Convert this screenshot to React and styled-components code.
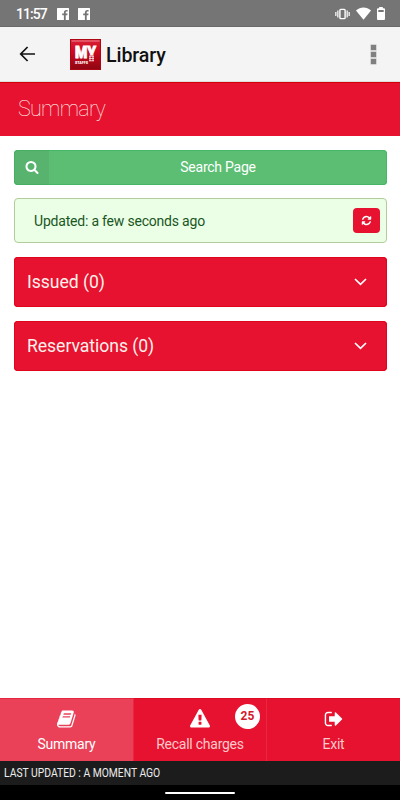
import React, { useState } from 'react';
import styled, { createGlobalStyle } from 'styled-components';

const GlobalStyle = createGlobalStyle`
  * {
    box-sizing: border-box;
  }
  body {
    margin: 0;
    background-color: #fff;
    font-family: Roboto, "Liberation Sans", sans-serif;
  }
  button {
    font-family: inherit;
    border: none;
    padding: 0;
    cursor: pointer;
  }
`;

const Screen = styled.div`
  display: flex;
  flex-direction: column;
  width: 400px;
  height: 800px;
  overflow: hidden;
  background-color: #fff;
`;

const StatusBar = styled.div`
  display: flex;
  align-items: center;
  flex: none;
  height: 27px;
  padding: 1px 15px 0 15px;
  background-color: #757575;
  border-bottom: 1px solid #696969;
  color: #fff;
`;

const Clock = styled.span`
  width: 42px;
  font-size: 14px;
  font-weight: 500;
  letter-spacing: -0.95px;
  padding-left: 1px;
  white-space: nowrap;
`;

const Notifications = styled.div`
  display: flex;
  gap: 9px;
  flex: 1;
`;

const StatusIcons = styled.div`
  display: flex;
  align-items: center;
  gap: 6px;
`;

const AppBar = styled.header`
  display: flex;
  align-items: center;
  flex: none;
  height: 55px;
  padding: 0 24px 0 19px;
  background-color: #f4f4f4;
  border-bottom: 1px solid #e2dcdc;
`;

const BackButton = styled.button`
  display: flex;
  width: 51px;
  background: none;
`;

const Logo = styled.svg`
  display: block;
  flex: none;
`;

const AppTitle = styled.h1`
  flex: 1;
  margin: 2px 0 0 5px;
  font-size: 19.6px;
  font-weight: 500;
  letter-spacing: -0.1px;
  color: #111;
`;

const MenuButton = styled.button`
  display: flex;
  flex-direction: column;
  gap: 2px;
  background: none;
`;

const MenuDot = styled.span`
  width: 5px;
  height: 5px;
  background-color: #808080;
  box-shadow: 0 0 0 0.5px #b5b5b5;
`;

const PageHeading = styled.div`
  display: flex;
  align-items: center;
  flex: none;
  height: 54px;
  padding: 0 18px 2px;
  background-color: #e6122f;
  border-top: 1px solid #d0000d;
`;

const PageTitle = styled.h2`
  margin: 0;
  font-size: 21.5px;
  font-weight: 100;
  letter-spacing: -0.7px;
  color: #fff0e8;
`;

const Content = styled.main`
  display: flex;
  flex-direction: column;
  flex: 1;
  padding: 14px 13px 0 14px;
`;

const SearchButton = styled.button`
  display: flex;
  height: 35px;
  margin-bottom: 13px;
  overflow: hidden;
  border-radius: 4px;
  background-color: #5bbe73;
  box-shadow: inset 0 0 0 1px #46b865;
  color: #fff;
`;

const SearchIcon = styled.span`
  display: flex;
  align-items: center;
  justify-content: center;
  width: 35px;
  height: 100%;
  padding-bottom: 1px;
  background-color: rgba(70, 110, 90, 0.14);
`;

const SearchLabel = styled.span`
  flex: 1;
  align-self: center;
  padding-bottom: 1px;
  font-size: 14px;
  letter-spacing: -0.25px;
`;

const UpdatedBox = styled.div`
  display: flex;
  align-items: center;
  justify-content: space-between;
  height: 45px;
  margin-bottom: 14px;
  padding: 0 6px 0 19px;
  border: 1px solid #b2cc9b;
  border-radius: 4px;
  background-color: #ebffe6;
  color: #1a561f;
  font-size: 14px;
  letter-spacing: -0.2px;
`;

const RefreshButton = styled.button`
  display: flex;
  align-items: center;
  justify-content: center;
  width: 27px;
  height: 25px;
  border-radius: 4px;
  background-color: #e6122f;
  color: #fff;
`;

const Panel = styled.button`
  display: flex;
  align-items: center;
  justify-content: space-between;
  height: 50px;
  margin-bottom: 14px;
  padding: 0 20px 0 13px;
  border-radius: 4px;
  background-color: #e6122f;
  box-shadow: inset 0 0 0 1px #e0041c;
  color: #fff0ec;
  font-size: 17.6px;
  letter-spacing: -0.05px;
`;

const TabBar = styled.nav`
  display: grid;
  grid-template-columns: 134px 133px 133px;
  flex: none;
  height: 63px;
  background-color: #e6122f;
`;

const Tab = styled.button`
  position: relative;
  display: flex;
  flex-direction: column;
  align-items: center;
  padding-top: 10px;
  background-color: ${(props) => (props.$active ? '#ea4159' : '#e6122f')};
  border-top: 1px solid ${(props) => (props.$active ? '#e6253f' : '#df0a22')};
  color: #fff;

  &:not(:last-child) {
    border-right: 1px solid #e9273f;
  }
`;

const TabLabel = styled.span`
  margin-top: 7px;
  font-size: 14px;
  line-height: 16px;
  letter-spacing: -0.25px;
  white-space: nowrap;
  color: ${(props) => (props.$active ? '#fff' : '#ffc9cb')};
`;

const Badge = styled.span`
  position: absolute;
  top: 5px;
  right: 6px;
  width: 25px;
  height: 25px;
  border-radius: 50%;
  background-color: #fff;
  color: #d4182b;
  font-size: 12px;
  font-weight: 700;
  line-height: 24px;
  text-align: center;
`;

const Footer = styled.footer`
  display: flex;
  align-items: center;
  flex: none;
  height: 24px;
  padding-left: 4px;
  background-color: #1c1c1c;
`;

// squeezed to look like Roboto Condensed
const FooterText = styled.span`
  font-size: 12px;
  color: #ececec;
  white-space: nowrap;
  transform: scaleX(0.86);
  transform-origin: left center;
`;

const GestureBar = styled.div`
  display: flex;
  justify-content: center;
  flex: none;
  height: 15px;
  padding-top: 7px;
  background-color: #000;
`;

const GesturePill = styled.span`
  width: 70px;
  height: 2px;
  border-radius: 1px;
  background-color: #fff;
`;

const icons = {
  search: 'M1216 832q0-185-131.5-316.5t-316.5-131.5-316.5 131.5-131.5 316.5 131.5 316.5 316.5 131.5 316.5-131.5 131.5-316.5zm512 832q0 52-38 90t-90 38q-54 0-90-38l-343-342q-179 124-399 124-143 0-273.5-55.5t-225-150-150-225-55.5-273.5 55.5-273.5 150-225 225-150 273.5-55.5 273.5 55.5 225 150 150 225 55.5 273.5q0 220-124 399l343 343q37 37 37 90z',
  refresh: 'M1639 1056q0 5-1 7-64 268-268 434.5t-478 166.5q-146 0-282.5-55t-243.5-157l-129 129q-19 19-45 19t-45-19-19-45v-448q0-26 19-45t45-19h448q26 0 45 19t19 45-19 45l-137 137q71 66 161 102t187 36q134 0 250-65t186-179q11-17 53-117 8-23 30-23h192q13 0 22.5 9.5t9.5 22.5zm25-800v448q0 26-19 45t-45 19h-448q-26 0-45-19t-19-45 19-45l138-138q-148-137-349-137-134 0-250 65t-186 179q-11 17-53 117-8 23-30 23h-199q-13 0-22.5-9.5t-9.5-22.5v-7q65-268 270-434.5t480-166.5q146 0 284 55.5t245 156.5l130-129q19-19 45-19t45 19 19 45z',
  book: 'M1639 478q40 57 18 129l-275 906q-19 64-76.5 107.5t-122.5 43.5h-923q-77 0-148.5-53.5t-99.5-131.5q-24-67-2-127 0-4 3-27t4-37q1-8-3-21.5t-3-19.5q2-11 8-21t16.5-23.5 16.5-23.5q23-38 45-91.5t30-91.5q3-10 .5-30t-.5-28q3-11 17-28t17-23q21-36 42-92t25-90q1-9-2.5-32t.5-28q4-13 22-30.5t22-22.5q19-26 42.5-84.5t27.5-96.5q1-8-3-25.5t-2-26.5q2-8 9-18t18-23 17-21q8-12 16.5-30.5t15-35 16-36 19.5-32 26.5-23.5 36-11.5 47.5 5.5l-1 3q38-9 51-9h761q74 0 114 56t18 130l-274 906q-36 119-71.5 153.5t-128.5 34.5h-869q-27 0-38 15-11 16-1 43 24 70 144 70h923q29 0 56-15.5t35-41.5l300-987q7-22 5-57 38 15 59 43zm-1064 2q-4 13 2 22.5t20 9.5h608q13 0 25.5-9.5t16.5-22.5l21-64q4-13-2-22.5t-20-9.5h-608q-13 0-25.5 9.5t-16.5 22.5zm-83 256q-4 13 2 22.5t20 9.5h608q13 0 25.5-9.5t16.5-22.5l21-64q4-13-2-22.5t-20-9.5h-608q-13 0-25.5 9.5t-16.5 22.5z',
  warning: 'M1024 1375v-190q0-14-9.5-23.5t-22.5-9.5h-192q-13 0-22.5 9.5t-9.5 23.5v190q0 14 9.5 23.5t22.5 9.5h192q13 0 22.5-9.5t9.5-23.5zm-2-374l18-459q0-12-10-19-13-11-24-11h-220q-11 0-24 11-10 7-10 21l17 457q0 10 10 16.5t24 6.5h185q14 0 23.5-6.5t10.5-16.5zm-14-934l768 1408q35 63-2 126-17 29-46.5 46t-63.5 17h-1536q-34 0-63.5-17t-46.5-46q-37-63-2-126l768-1408q17-31 47-49t65-18 65 18 47 49z',
  exit: 'M704 1440q0 4 1 20t.5 26.5-3 23.5-10 19.5-20.5 6.5h-320q-119 0-203.5-84.5t-84.5-203.5v-704q0-119 84.5-203.5t203.5-84.5h320q13 0 22.5 9.5t9.5 22.5q0 4 1 20t.5 26.5-3 23.5-10 19.5-20.5 6.5h-320q-66 0-113 47t-47 113v704q0 66 47 113t113 47h312l11.5 1 11.5 3 8 5.5 7 9 2 13.5zm928-544q0 26-19 45l-544 544q-19 19-45 19t-45-19-19-45v-288h-448q-26 0-45-19t-19-45v-384q0-26 19-45t45-19h448v-288q0-26 19-45t45-19 45 19l544 544q19 19 19 45z',
};

const Icon = ({ name, size }) => (
  <svg width={size} height={size} viewBox="0 0 1792 1792" fill="currentColor">
    <path d={icons[name]} />
  </svg>
);

const FacebookIcon = () => (
  <svg width="12" height="12" viewBox="0 0 12 12">
    <rect width="12" height="12" rx="0.5" fill="#fff" />
    <path d="M6.9 12V7.3H5.2V5.6h1.7V4.5c0-1.7.9-2.6 2.5-2.6h1.2v1.7h-.9c-.7 0-1 .3-1 1v1h1.8l-.2 1.7H8.7V12z" fill="#757575" />
  </svg>
);

const Chevron = () => (
  <svg width="13" height="8" viewBox="0 0 13 8" fill="none" stroke="#fff" strokeWidth="1.7">
    <path d="M1 1l5.5 5.3L12 1" />
  </svg>
);

const tabs = [
  { id: 'summary', label: 'Summary', icon: 'book' },
  { id: 'charges', label: 'Recall charges', icon: 'warning', badge: 25 },
  { id: 'exit', label: 'Exit', icon: 'exit' },
];

const panels = ['Issued', 'Reservations'];

const App = () => {
  const [activeTab, setActiveTab] = useState('summary');

  return (
    <Screen>
      <GlobalStyle />
      <StatusBar>
        <Clock>11:57</Clock>
        <Notifications>
          <FacebookIcon />
          <FacebookIcon />
        </Notifications>
        <StatusIcons>
          <svg width="15" height="12" viewBox="0 0 15 12">
            <path d="M.8 4v4M14.2 4v4M2.8 2.5v7M12.2 2.5v7" stroke="#dedede" strokeWidth="1.6" />
            <rect x="4.9" y="1.4" width="5.2" height="9.2" rx="0.8" fill="#757575" stroke="#fff" strokeWidth="1.4" />
          </svg>
          <svg width="15" height="13" viewBox="0 0 15 13">
            <path d="M0 3.6C4.3-.4 10.7-.4 15 3.6L7.5 12.8z" fill="#fff" />
          </svg>
          <svg width="8" height="13" viewBox="0 0 8 13">
            <path d="M2.2 0h3.6v1.3H7q1 0 1 1V12q0 1-1 1H1q-1 0-1-1V2.3q0-1 1-1h1.2z" fill="#fff" />
            <path d="M1.3 3h5.4v2H1.3z" fill="#757575" />
          </svg>
        </StatusIcons>
      </StatusBar>

      <AppBar>
        <BackButton aria-label="Back">
          <svg width="17" height="16" viewBox="0 0 17 16" fill="none" stroke="#111" strokeWidth="1.7">
            <path d="M16 8H2M8.6 1L1.7 8l6.9 7" />
          </svg>
        </BackButton>
        <Logo width="31" height="31" viewBox="0 0 31 31">
          <defs>
            <linearGradient id="logoFill" x1="0" y1="0" x2="0" y2="1">
              <stop offset="0" stopColor="#d92138" />
              <stop offset="0.4" stopColor="#cf0a20" />
              <stop offset="1" stopColor="#8c0611" />
            </linearGradient>
          </defs>
          <rect width="31" height="31" fill="url(#logoFill)" />
          <rect x="0.5" y="0.5" width="30" height="30" fill="none" stroke="#ad0715" />
          <path d="M1.5 2h28" stroke="#ee8590" />
          <g fill="#fff" fontFamily="Roboto, sans-serif" fontWeight="900">
            <text x="5" y="19.2" fontSize="17" textLength="21" lengthAdjust="spacingAndGlyphs" stroke="#fff" strokeWidth="0.9">MY</text>
            <text x="5" y="24.6" fontSize="4.4" textLength="13" lengthAdjust="spacingAndGlyphs">STAFFS</text>
          </g>
          <path d="M18.5 16.5h6v6h-6z" fill="#b8091b" />
          <path d="M19 17.2h5M19 19.4h5M19 21.8h5M20 17v5M23 17v5" stroke="#fff" strokeWidth="0.8" />
        </Logo>
        <AppTitle>Library</AppTitle>
        <MenuButton aria-label="Menu">
          <MenuDot />
          <MenuDot />
          <MenuDot />
        </MenuButton>
      </AppBar>

      <PageHeading>
        <PageTitle>Summary</PageTitle>
      </PageHeading>

      <Content>
        <SearchButton>
          <SearchIcon>
            <Icon name="search" size={14} />
          </SearchIcon>
          <SearchLabel>Search Page</SearchLabel>
        </SearchButton>
        <UpdatedBox>
          <span>Updated: a few seconds ago</span>
          <RefreshButton aria-label="Refresh">
            <Icon name="refresh" size={11} />
          </RefreshButton>
        </UpdatedBox>
        {panels.map((panel) => (
          <Panel key={panel}>
            <span>{panel} (0)</span>
            <Chevron />
          </Panel>
        ))}
      </Content>

      <TabBar>
        {tabs.map((tab) => (
          <Tab key={tab.id} $active={tab.id === activeTab} onClick={() => setActiveTab(tab.id)}>
            <Icon name={tab.icon} size={20} />
            <TabLabel $active={tab.id === activeTab}>{tab.label}</TabLabel>
            {tab.badge && <Badge>{tab.badge}</Badge>}
          </Tab>
        ))}
      </TabBar>
      <Footer>
        <FooterText>LAST UPDATED : A MOMENT AGO</FooterText>
      </Footer>
      <GestureBar>
        <GesturePill />
      </GestureBar>
    </Screen>
  );
};

export default App;
